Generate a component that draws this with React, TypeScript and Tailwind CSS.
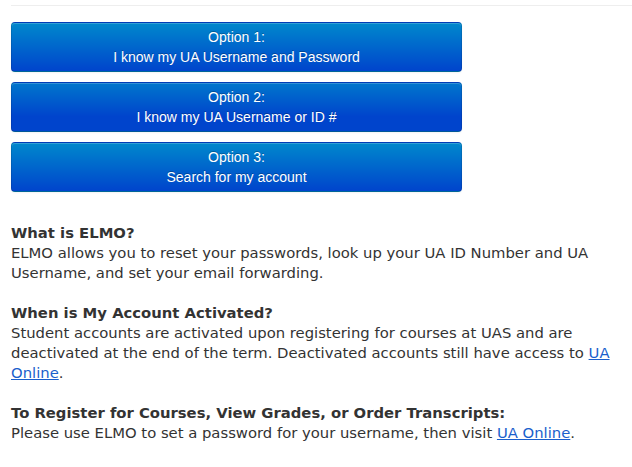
import React from "react";

const btnBase =
  "block w-[451px] h-[50px] rounded-[4px] border border-[rgba(0,0,0,0.1)] border-b-[rgba(0,0,0,0.25)] text-white text-[14px] leading-[20px] text-center [text-shadow:0_-1px_0_rgba(0,0,0,0.25)] shadow-[inset_0_1px_0_rgba(255,255,255,0.2),0_1px_2px_rgba(0,0,0,0.05)]";

export default function App() {
  return (
    <div className="w-[632px] h-[467px] bg-white overflow-hidden">
      <div className="pt-[5px] pl-[11px]">
        <div className="h-px bg-[#eeeeee]" />
      </div>
      <div className="pl-[11px] pt-[16px] flex flex-col gap-[10px] font-['Liberation_Sans',Arial,sans-serif]">
        <button className={btnBase + " bg-[linear-gradient(to_bottom,#0088cc,#0044cc)]"}>
          Option 1:
          <br />I know my UA Username and Password
        </button>
        <button className={btnBase + " bg-[linear-gradient(to_bottom,#0076cc_0%,#0044cc_70%,#0044cc_100%)]"}>
          Option 2:
          <br />I know my UA Username or ID #
        </button>
        <button className={btnBase + " bg-[linear-gradient(to_bottom,#0088cc,#0044cc)]"}>
          Option 3:
          <br />
          Search for my account
        </button>
      </div>
      <div className="pl-[11px] pt-[31px] pr-[8px] text-[14.8px] leading-[20px] text-[#333333] font-['DejaVu_Sans',Verdana,sans-serif]">
        <p>
          <b>What is ELMO?</b>
          <br />
          ELMO allows you to reset your passwords, look up your UA ID Number and UA Username, and set your email forwarding.
        </p>
        <p className="mt-[20px]">
          <b>When is My Account Activated?</b>
          <br />
          Student accounts are activated upon registering for courses at UAS and are deactivated at the end of the term. Deactivated accounts still have access to{" "}
          <a href="#" className="text-[#1a5fcc] underline">
            UA Online
          </a>
          .
        </p>
        <p className="mt-[20px]">
          <b>To Register for Courses, View Grades, or Order Transcripts:</b>
          <br />
          Please use ELMO to set a password for your username, then visit{" "}
          <a href="#" className="text-[#1a5fcc] underline">
            UA Online
          </a>
          .
        </p>
      </div>
    </div>
  );
}
